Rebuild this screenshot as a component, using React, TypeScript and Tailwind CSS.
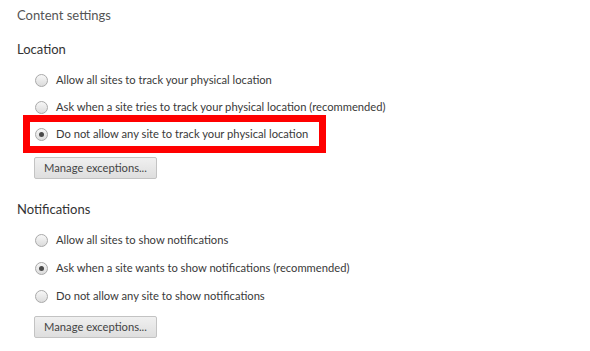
import React from 'react';

interface Option {
  label: string;
  checked?: boolean;
  highlight?: boolean;
}

const locationOptions: Option[] = [
  { label: 'Allow all sites to track your physical location' },
  { label: 'Ask when a site tries to track your physical location (recommended)' },
  { label: 'Do not allow any site to track your physical location', checked: true, highlight: true },
];

const notificationOptions: Option[] = [
  { label: 'Allow all sites to show notifications' },
  { label: 'Ask when a site wants to show notifications (recommended)', checked: true },
  { label: 'Do not allow any site to show notifications' },
];

const Radio: React.FC<{ checked?: boolean }> = ({ checked }) => (
  <span className="w-[13px] h-[13px] rounded-full border border-[#a9a9a9] bg-gradient-to-b from-[#f7f7f7] to-[#dcdcdc] flex items-center justify-center shrink-0">
    {checked && <span className="w-[5px] h-[5px] rounded-full bg-[#4a4a4a]" />}
  </span>
);

const RadioRow: React.FC<{ option: Option; tall?: boolean }> = ({ option, tall }) => (
  <div className={`relative flex items-center pl-[35px] ${tall ? 'h-[28px]' : 'h-[27px]'}`}>
    {option.highlight && (
      <div className="absolute left-[23px] top-[-6px] w-[303px] h-[38px] border-[7px] border-[#ff0000]" />
    )}
    <Radio checked={option.checked} />
    <span className="ml-[8px] text-[11.2px] text-[#3a3a3a]">{option.label}</span>
  </div>
);

const ManageButton: React.FC<{ className?: string }> = ({ className }) => (
  <button className={`block ml-[34px] w-[123px] h-[22px] rounded-[2px] border border-[#c3c3c3] bg-gradient-to-b from-[#f0f0f0] to-[#dedede] text-[11.2px] text-[#444] leading-none ${className ?? ''}`}>
    Manage exceptions...
  </button>
);

const App: React.FC = () => {
  return (
    <div className="w-[590px] h-[351px] bg-white overflow-hidden pt-[5px]" style={{ fontFamily: 'Lato, "Open Sans", sans-serif' }}>
      <h2 className="pl-[17px] text-[13px] text-[#555] h-[20px] leading-[20px]">Content settings</h2>

      <h3 className="mt-[14px] pl-[17px] text-[13px] text-[#333] h-[20px] leading-[20px]">Location</h3>
      <div className="mt-[8px]">
        {locationOptions.map((o, i) => (
          <RadioRow key={i} option={o} />
        ))}
      </div>
      <ManageButton className="mt-[9px]" />

      <h3 className="mt-[20px] pl-[17px] text-[13px] text-[#333] h-[20px] leading-[20px]">Notifications</h3>
      <div className="mt-[7px]">
        {notificationOptions.map((o, i) => (
          <RadioRow key={i} option={o} tall />
        ))}
      </div>
      <ManageButton className="mt-[6px]" />
    </div>
  );
};

export default App;
